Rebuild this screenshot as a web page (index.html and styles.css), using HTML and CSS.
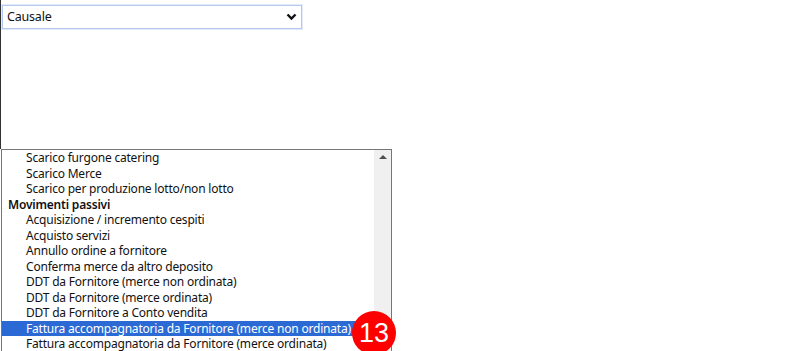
FILE: index.html
```html
<!DOCTYPE html>
<html>
<head>
<meta charset="utf-8">
<title>Causale</title>
<link rel="stylesheet" href="styles.css">
</head>
<body>
    <!-- campo di selezione in alto -->
    <div class="top">
        <div class="combo">
            <span class="combo-text">Causale</span>
            <svg class="chevron" width="11" height="8" viewBox="0 0 11 8">
                <path d="M1.5 1.5 L5.5 5.5 L9.5 1.5" fill="none" stroke="#111" stroke-width="2.4"/>
            </svg>
        </div>
    </div>

    <!-- lista delle causali -->
    <div class="listbox">
        <ul class="items">
            <li class="opt">Scarico furgone catering</li>
            <li class="opt">Scarico Merce</li>
            <li class="opt">Scarico per produzione lotto/non lotto</li>
            <li class="group">Movimenti passivi</li>
            <li class="opt">Acquisizione / incremento cespiti</li>
            <li class="opt">Acquisto servizi</li>
            <li class="opt">Annullo ordine a fornitore</li>
            <li class="opt">Conferma merce da altro deposito</li>
            <li class="opt">DDT da Fornitore (merce non ordinata)</li>
            <li class="opt">DDT da Fornitore (merce ordinata)</li>
            <li class="opt">DDT da Fornitore a Conto vendita</li>
            <li class="opt selected">Fattura accompagnatoria da Fornitore (merce non ordinata)</li>
            <li class="opt">Fattura accompagnatoria da Fornitore (merce ordinata)</li>
        </ul>
        <div class="scrollbar">
            <span class="arrow-up"></span>
        </div>
        <div class="badge">13</div>
    </div>
</body>
</html>
```

FILE: styles.css
```css
body{
   margin: 0px;
   background: white;
   font-family: "Noto Sans", "Open Sans", sans-serif;
   font-size: 12px;
   letter-spacing: -0.2px;
   color: #111;
   overflow: hidden;
}
ul,li{
   margin: 0px;
   padding: 0px;
   list-style: none;
}
/* parte alta con la linea scura a sinistra */
.top{
   height: 144px;
   padding-top: 5px;
   border-left: 1px solid #333;
}
.combo{
   width: 290px;
   height: 22px;
   margin-left: 1px;
   padding: 0 4px 0 4px;
   border: 1px solid #b4c9f0;
   box-shadow: 0 0 0 1px #e3ebfa;
   display: flex;
   align-items: center;
   justify-content: space-between;
   font-size: 12.5px;
}
.combo-text{
   line-height: 22px;
}
/* lista */
.listbox{
   position: relative;
   width: 389px;
   height: 240px;
   margin-left: 1px;
   border: 1px solid #767676;
   display: flex;
}
.items{
   flex: 1;
}
.items li{
   height: 15.5px;
   line-height: 15.5px;
   white-space: nowrap;
}
.opt{
   padding-left: 24px;
}
.group{
   padding-left: 6px;
   font-weight: 600;
}
.selected{
   background: #2b6ad5;
   color: white;
}
.scrollbar{
   width: 17px;
   background: #f0f0f0;
   display: flex;
   justify-content: center;
}
.arrow-up{
   width: 0;
   height: 0;
   margin-top: 5px;
   border-left: 4px solid transparent;
   border-right: 4px solid transparent;
   border-bottom: 4px solid #505050;
}
/* numero del passo */
.badge{
   position: absolute;
   left: 350px;
   top: 161px;
   width: 44px;
   height: 44px;
   border-radius: 50%;
   background: #f00;
   color: white;
   font-family: "Liberation Sans", Arial, sans-serif;
   font-size: 27px;
   letter-spacing: 0;
   line-height: 44px;
   text-align: center;
}
```
